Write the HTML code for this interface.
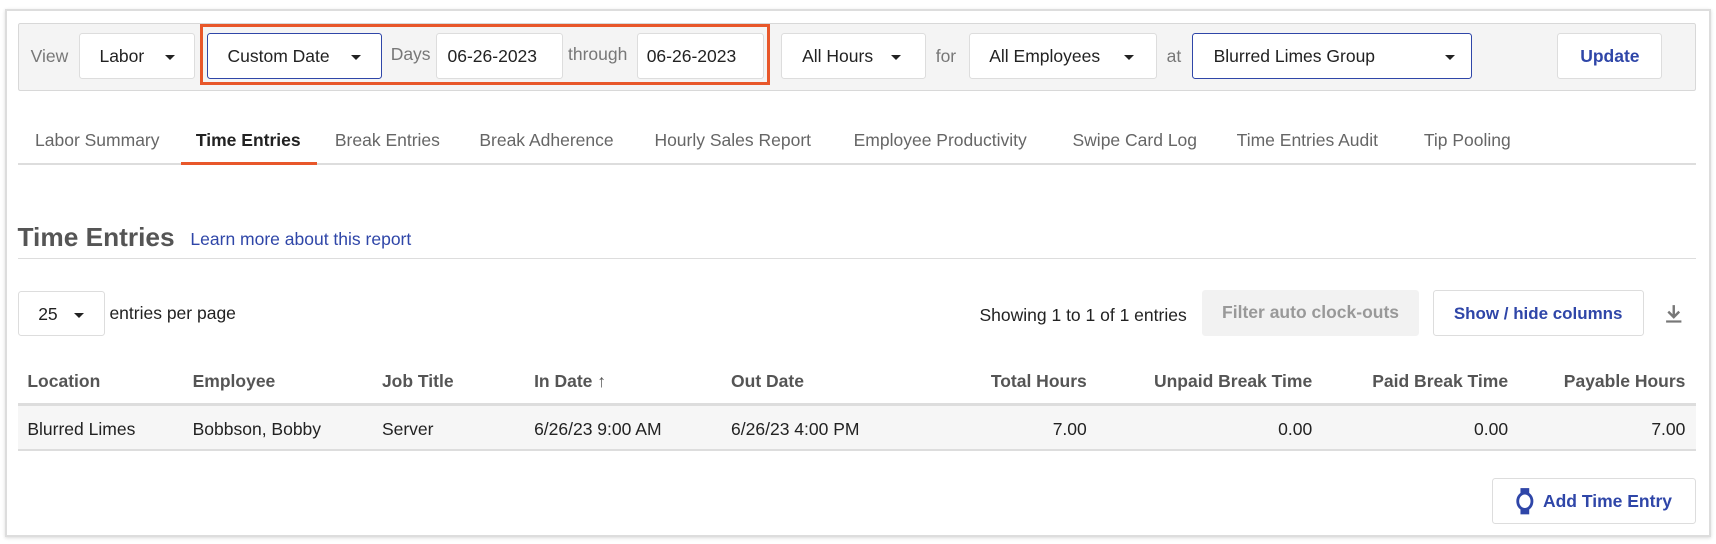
<!DOCTYPE html>
<html><head><style>
*{box-sizing:border-box;margin:0;padding:0}
html,body{width:1716px;height:544px;overflow:hidden;background:#fff;font-family:"Liberation Sans",sans-serif;color:#222}
#w{zoom:1.0944;width:1568px;height:497px;position:relative}
.a{position:absolute;white-space:nowrap}
.frame{left:5px;top:8px;width:1558px;height:483px;border:2px solid #ddd;box-shadow:0 1px 3px rgba(0,0,0,.15)}
.bar{left:16px;top:21px;width:1534px;height:62px;background:#f4f4f4;border:1px solid #d8d8d8;border-radius:2px}
.lbl{color:#777;font-size:16px}
.box{background:#fff;border:1px solid #ddd;border-radius:3px;height:42px;font-size:16px;line-height:42px;padding-left:18px;color:#222}
.blue{border-color:#2f46a8}
.car{position:absolute;top:19px;width:0;height:0;border-left:5px solid transparent;border-right:5px solid transparent;border-top:5px solid #222}
.tab{top:119px;font-size:16px;color:#666}
.h{top:339px;font-weight:bold;color:#555;font-size:16px}
.c{top:383px;font-size:16px;color:#222}
</style></head><body><div id="w">
<div class="a frame"></div>
<div class="a bar"></div>
<div class="a lbl" style="left:28px;top:42px">View</div>
<div class="a box" style="left:72px;top:30px;width:106px">Labor<span class="car" style="left:78px"></span></div>
<div class="a box blue" style="left:189px;top:30px;width:160px">Custom Date<span class="car" style="left:131px"></span></div>
<div class="a lbl" style="left:357px;top:40px">Days</div>
<div class="a box" style="left:398px;top:30px;width:116px;padding-left:10px">06-26-2023</div>
<div class="a lbl" style="left:519px;top:40px">through</div>
<div class="a box" style="left:582px;top:30px;width:116px;padding-left:8px">06-26-2023</div>
<div class="a" style="left:183px;top:22px;width:521px;height:56px;border:3px solid #e8572a"></div>
<div class="a box" style="left:714px;top:30px;width:132px">All Hours<span class="car" style="left:99px"></span></div>
<div class="a lbl" style="left:855px;top:42px">for</div>
<div class="a box" style="left:885px;top:30px;width:172px">All Employees<span class="car" style="left:141px"></span></div>
<div class="a lbl" style="left:1066px;top:42px">at</div>
<div class="a box blue" style="left:1089px;top:30px;width:256px;padding-left:19px">Blurred Limes Group<span class="car" style="left:230px"></span></div>
<div class="a box" style="left:1423px;top:30px;width:96px;padding:0;text-align:center;color:#2f46a8;font-weight:bold">Update</div>

<div class="a tab" style="left:32px">Labor Summary</div>
<div class="a tab" style="left:179px;color:#222;font-weight:bold">Time Entries</div>
<div class="a tab" style="left:306px">Break Entries</div>
<div class="a tab" style="left:438px">Break Adherence</div>
<div class="a tab" style="left:598px">Hourly Sales Report</div>
<div class="a tab" style="left:780px">Employee Productivity</div>
<div class="a tab" style="left:980px">Swipe Card Log</div>
<div class="a tab" style="left:1130px">Time Entries Audit</div>
<div class="a tab" style="left:1301px">Tip Pooling</div>
<div class="a" style="left:16px;top:149px;width:1534px;height:2px;background:#ddd"></div>
<div class="a" style="left:165px;top:148px;width:125px;height:3px;background:#e8572a"></div>

<div class="a" style="left:16px;top:203px;font-size:24px;font-weight:bold;color:#555">Time Entries</div>
<div class="a" style="left:174px;top:209px;font-size:16px;color:#2f46a8">Learn more about this report</div>
<div class="a" style="left:16px;top:236px;width:1534px;height:1px;background:#ddd"></div>

<div class="a box" style="left:16px;top:266px;width:80px;height:41px;padding-left:18px">25<span class="car" style="left:51px"></span></div>
<div class="a" style="left:100px;top:277px;font-size:16px">entries per page</div>
<div class="a" style="left:895px;top:279px;font-size:16px">Showing 1 to 1 of 1 entries</div>
<div class="a" style="left:1098px;top:265px;width:199px;height:42px;background:#f2f2f2;border-radius:3px;color:#999;font-weight:bold;font-size:16px;line-height:42px;text-align:center">Filter auto clock-outs</div>
<div class="a box" style="left:1309px;top:265px;width:193px;padding:0;text-align:center;color:#2f46a8;font-weight:bold;font-size:15.5px">Show / hide columns</div>
<svg class="a" style="left:1521px;top:278px" width="16" height="18" viewBox="0 0 16 18"><path d="M8 1v10M3 7l5 5 5-5" stroke="#777" stroke-width="2.2" fill="none"/><rect x="1" y="15" width="14" height="2" fill="#777"/></svg>

<div class="a h" style="left:25px">Location</div>
<div class="a h" style="left:176px">Employee</div>
<div class="a h" style="left:349px">Job Title</div>
<div class="a h" style="left:488px">In Date <span style="font-weight:normal">&#8593;</span></div>
<div class="a h" style="left:668px">Out Date</div>
<div class="a h" style="right:575px">Total Hours</div>
<div class="a h" style="right:369px">Unpaid Break Time</div>
<div class="a h" style="right:190px">Paid Break Time</div>
<div class="a h" style="right:28px">Payable Hours</div>
<div class="a" style="left:16px;top:368px;width:1534px;height:3px;background:#ddd"></div>
<div class="a" style="left:16px;top:371px;width:1534px;height:41px;background:#f6f6f6;border-bottom:2px solid #ddd"></div>
<div class="a c" style="left:25px">Blurred Limes</div>
<div class="a c" style="left:176px">Bobbson, Bobby</div>
<div class="a c" style="left:349px">Server</div>
<div class="a c" style="left:488px">6/26/23 9:00 AM</div>
<div class="a c" style="left:668px">6/26/23 4:00 PM</div>
<div class="a c" style="right:575px">7.00</div>
<div class="a c" style="right:369px">0.00</div>
<div class="a c" style="right:190px">0.00</div>
<div class="a c" style="right:28px">7.00</div>

<div class="a box" style="left:1363px;top:437px;width:187px;height:42px;padding-left:46px;color:#2f46a8;font-weight:bold">Add Time Entry</div>
<svg class="a" style="left:1384px;top:445px" width="18" height="26" viewBox="0 0 18 26"><rect x="5" y="1" width="8" height="5" fill="#2f46a8"/><rect x="5" y="20" width="8" height="5" fill="#2f46a8"/><ellipse cx="9" cy="13" rx="6.5" ry="7.5" stroke="#2f46a8" stroke-width="2.6" fill="none"/></svg>
</div></body></html>
